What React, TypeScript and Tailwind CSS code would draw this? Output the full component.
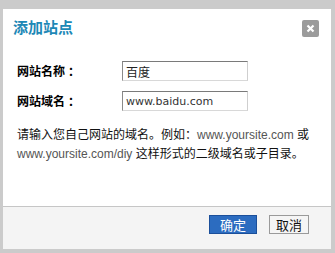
const cjk = "font-['Liberation_Sans','Noto_Sans_CJK_SC',sans-serif]";

const App = () => {
  return (
    <div className={`w-[335px] h-[253px] bg-[#cbcbcb] pt-[9px] pl-[3px] pr-[4px] pb-[4px] ${cjk}`}>
      <div className="h-full bg-white flex flex-col">
        {/* Header */}
        <div className="flex items-start justify-between pl-[10px] pr-[12px] pt-[8px]">
          <h1 className="text-[15px] leading-[20px] font-bold text-[#1d88b6] font-['Noto_Sans_CJK_SC',sans-serif]">
            添加站点
          </h1>
          <button className="mt-[3px] w-[17px] h-[17px] rounded-[2px] bg-[#9b9b9b] flex items-center justify-center">
            <svg width="9" height="9" viewBox="0 0 9 9">
              <path d="M1.5 1.5 L7.5 7.5 M7.5 1.5 L1.5 7.5" stroke="#fff" strokeWidth="2.2" />
            </svg>
          </button>
        </div>

        {/* Form */}
        <div className="pl-[14px] pr-[20px] mt-[24px] flex flex-col gap-[10px]">
          <div className="flex items-center">
            <label className="w-[105px] text-[12px] font-bold text-black font-['Noto_Sans_CJK_SC',sans-serif]">
              网站名称<span className="ml-[3px]">：</span>
            </label>
            <input
              defaultValue="百度"
              className="w-[126px] h-[20px] px-[3px] text-[12px] text-[#222] border border-t-[#7a7a7a] border-l-[#8a8a8a] border-r-[#cfcfcf] border-b-[#d8d8d8] outline-none font-['DejaVu_Sans','Noto_Sans_CJK_SC',sans-serif]"
            />
          </div>
          <div className="flex items-center">
            <label className="w-[105px] text-[12px] font-bold text-black font-['Noto_Sans_CJK_SC',sans-serif]">
              网站域名<span className="ml-[3px]">：</span>
            </label>
            <input
              defaultValue="www.baidu.com"
              className="w-[126px] h-[20px] px-[3px] text-[11px] text-[#333] border border-t-[#7a7a7a] border-l-[#8a8a8a] border-r-[#cfcfcf] border-b-[#d8d8d8] outline-none font-['DejaVu_Sans','Noto_Sans_CJK_SC',sans-serif]"
            />
          </div>
        </div>

        <p className="pl-[14px] pr-[10px] mt-[15px] text-[12px] leading-[19px] text-[#111]">
          请输入您自己网站的域名。例如：<span className="text-[#555]">www.yoursite.com</span> 或
          <br />
          <span className="text-[#555]">www.yoursite.com/diy</span> 这样形式的二级域名或子目录。
        </p>

        {/* Footer */}
        <div className="mt-auto h-[43px] bg-[#f4f4f4] border-t border-[#c6c6c6] flex justify-end items-start gap-[12px] pt-[8px] pr-[22px]">
          <button className="w-[48px] h-[19px] bg-[#2c6cc0] border border-[#1b4f9a] text-white text-[13px] leading-[17px] font-['Noto_Sans_CJK_SC',sans-serif]">
            确定
          </button>
          <button className="w-[40px] h-[19px] bg-[#f5f5f5] border border-[#9a9a9a] text-[#111] text-[13px] leading-[17px] font-['Noto_Sans_CJK_SC',sans-serif]">
            取消
          </button>
        </div>
      </div>
    </div>
  );
};

export default App;
